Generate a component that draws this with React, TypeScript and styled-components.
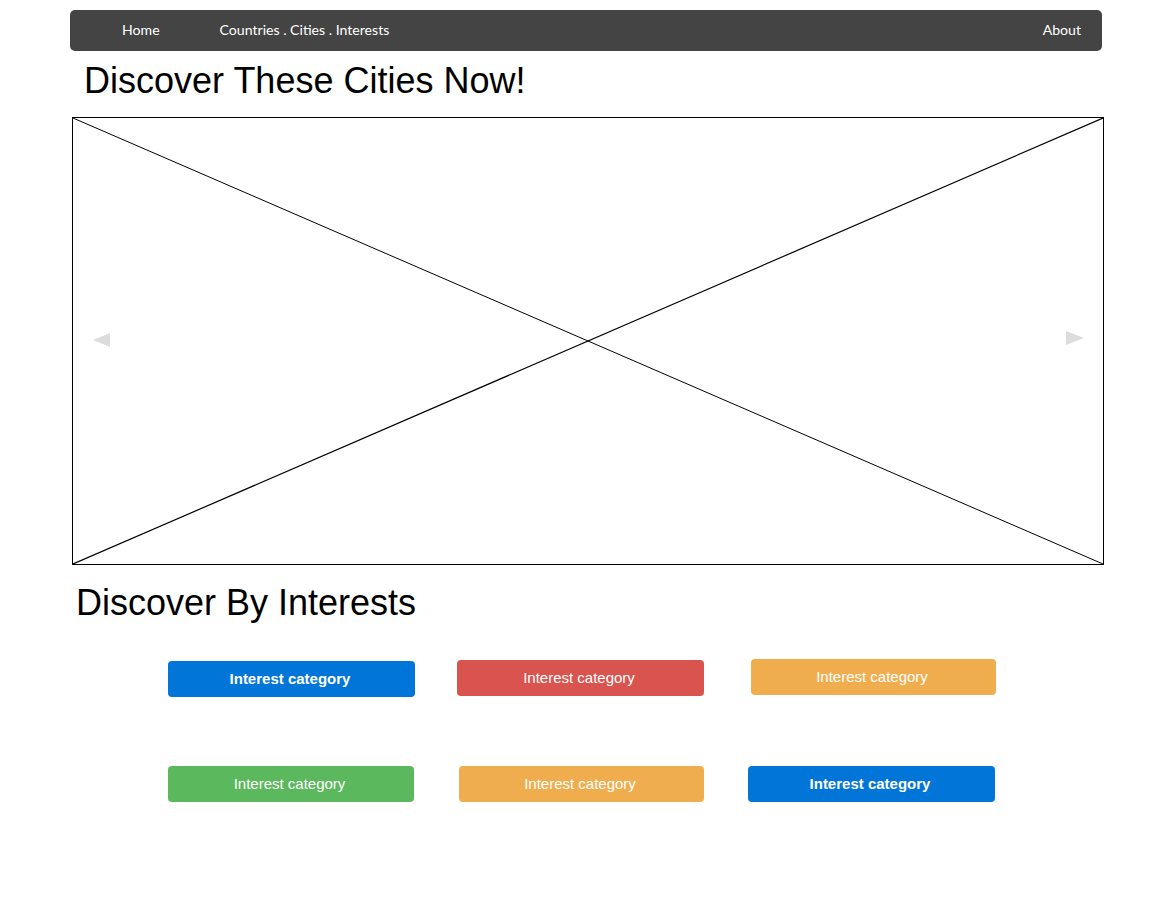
import React from "react";
import styled, { createGlobalStyle } from "styled-components";

const Global = createGlobalStyle`
  html, body { margin: 0; padding: 0; background: #fff; }
  body { font-family: "Liberation Sans", Arial, sans-serif; }
`;

const Page = styled.div`
  width: 1153px;
  height: 912px;
  padding: 10px 0 0 70px;
  box-sizing: border-box;
`;

const Nav = styled.nav`
  width: 1032px;
  height: 41px;
  background: #444444;
  border-radius: 5px;
  display: flex;
  align-items: center;
  padding: 0 21px 2px 52px;
  box-sizing: border-box;
  font-family: "Lato", "Open Sans", sans-serif;
  font-size: 14.1px;
  color: #ffffff;
`;

const NavItem = styled.a<{ $ml?: number }>`
  color: #fff;
  text-decoration: none;
  margin-left: ${(p) => p.$ml ?? 0}px;
`;

const Spacer = styled.div`
  flex: 1;
`;

const Heading = styled.h1<{ $ml: number; $mt: number }>`
  margin: ${(p) => p.$mt}px 0 0 ${(p) => p.$ml}px;
  font-family: "Liberation Sans", Arial, sans-serif;
  font-weight: 400;
  font-size: 36px;
  line-height: 46px;
  color: #000;
`;

const Slider = styled.div`
  position: relative;
  margin: 13px 0 0 2px;
  width: 1032px;
  height: 448px;
  border: 1px solid #000;
  box-sizing: border-box;
`;

const Cross = styled.svg`
  display: block;
  width: 100%;
  height: 100%;
`;

const Arrow = styled.div<{ $dir: "left" | "right" }>`
  position: absolute;
  top: ${(p) => (p.$dir === "left" ? 215 : 213)}px;
  ${(p) => (p.$dir === "left" ? "left: 20px;" : "right: 19px;")}
  width: 0;
  height: 0;
  border-top: 7px solid transparent;
  border-bottom: 7px solid transparent;
  ${(p) =>
    p.$dir === "left"
      ? "border-right: 17px solid #dcdcdc;"
      : "border-left: 18px solid #dcdcdc;"}
`;

const ButtonRow = styled.div<{ $mt: number }>`
  display: flex;
  align-items: flex-start;
  margin-top: ${(p) => p.$mt}px;
  padding-left: 98px;
`;

const colors = {
  blue: "#0275d8",
  red: "#d9534f",
  orange: "#f0ad4e",
  green: "#5cb85c",
};

const CategoryButton = styled.button<{
  $color: keyof typeof colors;
  $w: number;
  $ml: number;
  $mt: number;
  $bold?: boolean;
}>`
  width: ${(p) => p.$w}px;
  height: 36px;
  margin-left: ${(p) => p.$ml}px;
  margin-top: ${(p) => p.$mt}px;
  background: ${(p) => colors[p.$color]};
  border: none;
  border-radius: 4px;
  color: #fff;
  font-family: "Liberation Sans", Arial, sans-serif;
  font-size: 15px;
  font-weight: ${(p) => (p.$bold ? 700 : 400)};
  padding: 0 3px 2px 0;
  cursor: pointer;
`;

export default function App() {
  return (
    <>
      <Global />
      <Page>
        <Nav>
          <NavItem href="#">Home</NavItem>
          <NavItem href="#" $ml={60}>
            Countries . Cities . Interests
          </NavItem>
          <Spacer />
          <NavItem href="#">About</NavItem>
        </Nav>
        <Heading $ml={14} $mt={7}>
          Discover These Cities Now!
        </Heading>
        <Slider>
          <Cross viewBox="0 0 1030 446" preserveAspectRatio="none">
            <line x1="0" y1="0" x2="1030" y2="446" stroke="#000" strokeWidth="1" />
            <line x1="0" y1="446" x2="1030" y2="0" stroke="#000" strokeWidth="1.2" />
          </Cross>
          <Arrow $dir="left" />
          <Arrow $dir="right" />
        </Slider>
        <Heading $ml={6} $mt={15}>
          Discover By Interests
        </Heading>
        <ButtonRow $mt={33}>
          <CategoryButton $color="blue" $w={247} $ml={0} $mt={2} $bold>
            Interest category
          </CategoryButton>
          <CategoryButton $color="red" $w={247} $ml={42} $mt={1}>
            Interest category
          </CategoryButton>
          <CategoryButton $color="orange" $w={245} $ml={47} $mt={0}>
            Interest category
          </CategoryButton>
        </ButtonRow>
        <ButtonRow $mt={69}>
          <CategoryButton $color="green" $w={246} $ml={0} $mt={0}>
            Interest category
          </CategoryButton>
          <CategoryButton $color="orange" $w={245} $ml={45} $mt={0}>
            Interest category
          </CategoryButton>
          <CategoryButton $color="blue" $w={247} $ml={44} $mt={0} $bold>
            Interest category
          </CategoryButton>
        </ButtonRow>
      </Page>
    </>
  );
}
